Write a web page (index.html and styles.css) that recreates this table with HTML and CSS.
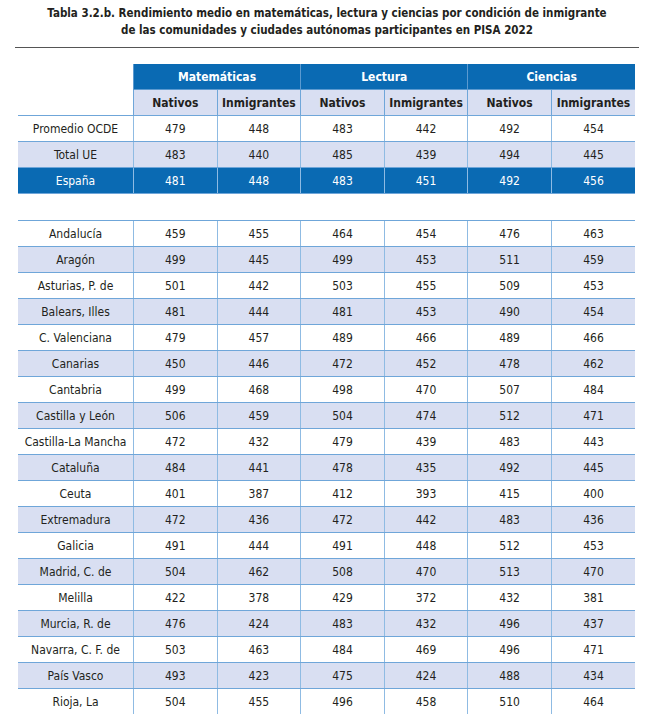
FILE: index.html
```html
<!DOCTYPE html>
<html lang="es">
<head>
  <meta charset="UTF-8">
  <title>Tabla 3.2.b</title>
  <link rel="stylesheet" href="styles.css">
</head>
<body>

  <h1 class="titulo">
    Tabla 3.2.b. Rendimiento medio en matemáticas, lectura y ciencias por condición de inmigrante<br>
    de las comunidades y ciudades autónomas participantes en PISA 2022
  </h1>
  <hr class="regla">

  <table class="tabla">
    <thead>
      <tr class="grupo">
        <th class="vacia"></th>
        <th colspan="2">Matemáticas</th>
        <th colspan="2">Lectura</th>
        <th colspan="2">Ciencias</th>
      </tr>
      <tr class="sub">
        <th class="vacia"></th>
        <th>Nativos</th><th>Inmigrantes</th>
        <th>Nativos</th><th>Inmigrantes</th>
        <th>Nativos</th><th>Inmigrantes</th>
      </tr>
    </thead>
    <tbody>
      <tr><td>Promedio OCDE</td><td>479</td><td>448</td><td>483</td><td>442</td><td>492</td><td>454</td></tr>
      <tr class="par"><td>Total UE</td><td>483</td><td>440</td><td>485</td><td>439</td><td>494</td><td>445</td></tr>
      <tr class="espana"><td>España</td><td>481</td><td>448</td><td>483</td><td>451</td><td>492</td><td>456</td></tr>
      <tr class="hueco"><td colspan="7"></td></tr>
      <tr><td>Andalucía</td><td>459</td><td>455</td><td>464</td><td>454</td><td>476</td><td>463</td></tr>
      <tr class="par"><td>Aragón</td><td>499</td><td>445</td><td>499</td><td>453</td><td>511</td><td>459</td></tr>
      <tr><td>Asturias, P. de</td><td>501</td><td>442</td><td>503</td><td>455</td><td>509</td><td>453</td></tr>
      <tr class="par"><td>Balears, Illes</td><td>481</td><td>444</td><td>481</td><td>453</td><td>490</td><td>454</td></tr>
      <tr><td>C. Valenciana</td><td>479</td><td>457</td><td>489</td><td>466</td><td>489</td><td>466</td></tr>
      <tr class="par"><td>Canarias</td><td>450</td><td>446</td><td>472</td><td>452</td><td>478</td><td>462</td></tr>
      <tr><td>Cantabria</td><td>499</td><td>468</td><td>498</td><td>470</td><td>507</td><td>484</td></tr>
      <tr class="par"><td>Castilla y León</td><td>506</td><td>459</td><td>504</td><td>474</td><td>512</td><td>471</td></tr>
      <tr><td>Castilla-La Mancha</td><td>472</td><td>432</td><td>479</td><td>439</td><td>483</td><td>443</td></tr>
      <tr class="par"><td>Cataluña</td><td>484</td><td>441</td><td>478</td><td>435</td><td>492</td><td>445</td></tr>
      <tr><td>Ceuta</td><td>401</td><td>387</td><td>412</td><td>393</td><td>415</td><td>400</td></tr>
      <tr class="par"><td>Extremadura</td><td>472</td><td>436</td><td>472</td><td>442</td><td>483</td><td>436</td></tr>
      <tr><td>Galicia</td><td>491</td><td>444</td><td>491</td><td>448</td><td>512</td><td>453</td></tr>
      <tr class="par"><td>Madrid, C. de</td><td>504</td><td>462</td><td>508</td><td>470</td><td>513</td><td>470</td></tr>
      <tr><td>Melilla</td><td>422</td><td>378</td><td>429</td><td>372</td><td>432</td><td>381</td></tr>
      <tr class="par"><td>Murcia, R. de</td><td>476</td><td>424</td><td>483</td><td>432</td><td>496</td><td>437</td></tr>
      <tr><td>Navarra, C. F. de</td><td>503</td><td>463</td><td>484</td><td>469</td><td>496</td><td>471</td></tr>
      <tr class="par"><td>País Vasco</td><td>493</td><td>423</td><td>475</td><td>424</td><td>488</td><td>434</td></tr>
      <tr class="ultima"><td>Rioja, La</td><td>504</td><td>455</td><td>496</td><td>458</td><td>510</td><td>464</td></tr>
    </tbody>
  </table>

</body>
</html>
```

FILE: styles.css
```css
body {
  margin: 0;
  padding: 5px 22px 0 18px;
  font-family: "DejaVu Sans Condensed", "DejaVu Sans", sans-serif;
  color: #231f20;
  background: #fff;
}
.titulo {
  margin: 0;
  font-size: 11.5px;
  line-height: 17px;
  font-weight: bold;
  text-align: center;
}
.regla {
  margin: 8px -3px 0 -3px;
  border: 0;
  border-top: 1px solid #555;
}
.tabla {
  margin-top: 16px;
  width: 617px;
  table-layout: fixed;
  border-collapse: collapse;
  font-size: 12px;
  text-align: center;
}
.tabla th, .tabla td {
  height: 25px;
  padding: 0;
  border: 1px solid #8fbbe3;
}
.tabla td:first-child, .tabla th:first-child {
  width: 115px;
  border-left: 0;
}
.tabla tr > :last-child {
  border-right: 0;
}
.grupo th {
  background: #0a6ab3;
  color: #fff;
  border-color: #5c9ad0;
  border-top: 0;
}
.sub th {
  background: #d9dff2;
  border-color: #6fa6d9;
}
.grupo .vacia, .sub .vacia {
  background: #fff;
  border-top: 0;
  border-left: 0;
  border-bottom-color: #6fa6d9;
}
.grupo .vacia {
  border-bottom: 0;
}
.tabla td {
  border-top-color: #6fa6d9;
  border-bottom-color: #6fa6d9;
}
.par td {
  background: #d9dff2;
}
.espana td {
  background: #0a6ab3;
  color: #fff;
}
.hueco td {
  border: 0;
  border-bottom: 1px solid #6fa6d9;
  height: 26px;
}
.ultima td {
  border-bottom: 0;
}
```
